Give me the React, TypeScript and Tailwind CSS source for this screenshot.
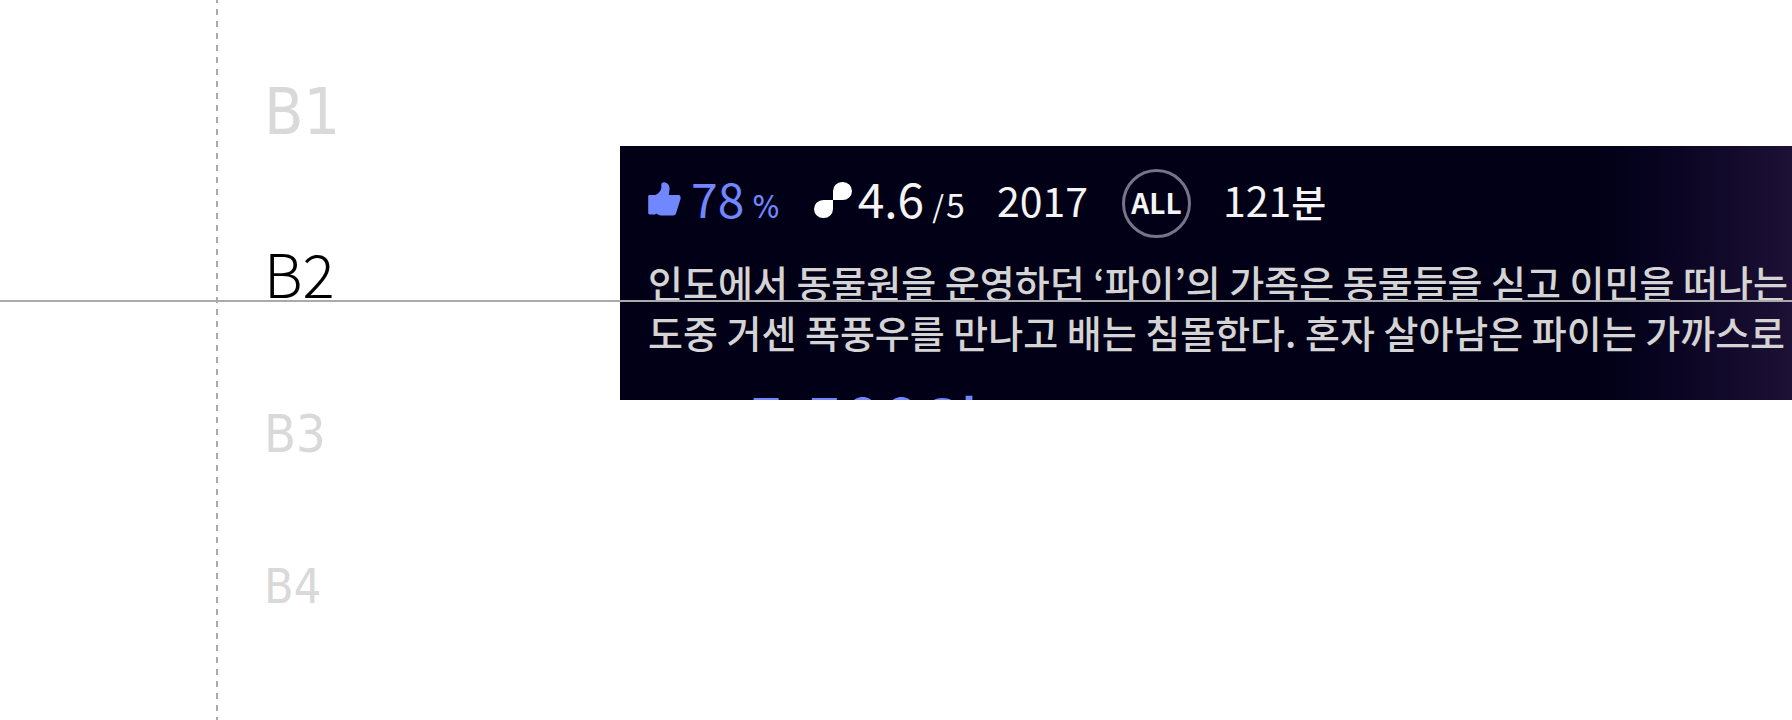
function ThumbIcon() {
  return (
    <svg viewBox="0 0 33 34" className="mt-[13px] h-[34px] w-[33px] shrink-0" fill="#7087ff" aria-hidden="true">
      <path d="M1.500 13H7C9.500 12.700 13 9 13.300 6V3C13.300 1 14.500 .2 16 .3C19.300 .5 21.800 3.500 21.600 7L20.800 13H30.500C32.300 13 33 14.800 32.500 17L28.300 30.500C27.700 32.700 26.800 33.500 25 33.500H13C11 33.500 9.800 32.600 8.300 31.600L7 32.400H2C.8 32.400 .2 31.700 .2 30.700V14.500C.2 13.500 .7 13 1.500 13Z" />
    </svg>
  );
}

function PediaIcon() {
  return (
    <svg viewBox="0 0 38 36" className="mt-[13px] h-[36px] w-[38px] shrink-0" fill="#ffffff" aria-hidden="true">
      <path d="M19 18V9A9.300 9 0 0 1 28.500 0A9.300 9 0 0 1 38 9A9.300 9 0 0 1 28.500 18Z" />
      <path d="M19 18V27A9.300 9 0 0 1 9.500 36A9.300 9 0 0 1 0 27A9.300 9 0 0 1 9.500 18Z" />
    </svg>
  );
}

export default function App() {
  return (
    <main className="relative flex min-h-screen items-start overflow-hidden bg-white font-['Noto_Sans_CJK_KR',sans-serif]">
      <ol className="w-[620px] shrink-0 pt-[72px] pl-[264px] text-[#d9d9d9]">
        <li className="font-['DejaVu_Sans_Condensed',sans-serif] text-[64px] leading-[80px]">B1</li>
        <li className="mt-20 text-[60px] leading-[80px] font-light text-black">B2</li>
        <li className="mt-20 font-['DejaVu_Sans_Condensed',sans-serif] text-[52px] leading-[84px]">B3</li>
        <li className="mt-20 font-['DejaVu_Sans_Condensed',sans-serif] text-[48px] leading-[60px]">B4</li>
      </ol>

      <section className="mt-[146px] h-[254px] min-w-0 flex-1 overflow-hidden bg-linear-to-r from-[#020016] from-83% via-[#0e0726] via-92% to-[#1d1135] pt-[23px] pl-7 whitespace-nowrap">
        <div className="flex h-[70px] items-start text-[#f4f4f4]">
          <ThumbIcon />
          <p className="ml-[10px] flex items-baseline text-[48px] leading-[56px] text-[#7087ff]">
            <span>78</span>
            <span className="ml-2 font-['Liberation_Sans_Narrow','DejaVu_Sans_Condensed',sans-serif] text-[32px]">%</span>
          </p>
          <span className="ml-[34px] flex">
            <PediaIcon />
          </span>
          <p className="ml-[6px] flex items-baseline text-[48px] leading-[56px]">
            <span>4.6</span>
            <span className="ml-2 text-[30px]">/</span>
            <span className="ml-[2px] text-[34px]">5</span>
          </p>
          <p className="ml-8 text-[41px] leading-[60px]">2017</p>
          <p className="ml-[34px] flex size-[69px] shrink-0 justify-center rounded-full border-3 border-[#77748a] text-[28px] leading-[60px] font-bold">
            ALL
          </p>
          <p className="ml-8 text-[41px] leading-[60px]">
            121<span className="text-[38px] font-medium">분</span>
          </p>
        </div>
        <p className="mt-[18px] text-[38px] leading-[50px] font-medium text-[#d4d4d4]">
          인도에서 동물원을 운영하던 ‘파이’의 가족은 동물들을 싣고 이민을 떠나는
          <br />
          도중 거센 폭풍우를 만나고 배는 침몰한다. 혼자 살아남은 파이는 가까스로
        </p>
        <p className="mt-3 ml-[98px] text-[70px] leading-[100px] text-[#7087ff]">
          5,500<span className="text-[64px] font-medium">원</span>
        </p>
      </section>

      <div className="pointer-events-none absolute inset-y-0 left-[216px] w-[2px] bg-[repeating-linear-gradient(to_bottom,#aaaaaa_0_3px,transparent_3px_9px,#aaaaaa_9px_12px)]" />
      <div className="pointer-events-none absolute inset-x-0 top-[300px] h-[2px] bg-[#aaaaaa]" />
    </main>
  );
}
